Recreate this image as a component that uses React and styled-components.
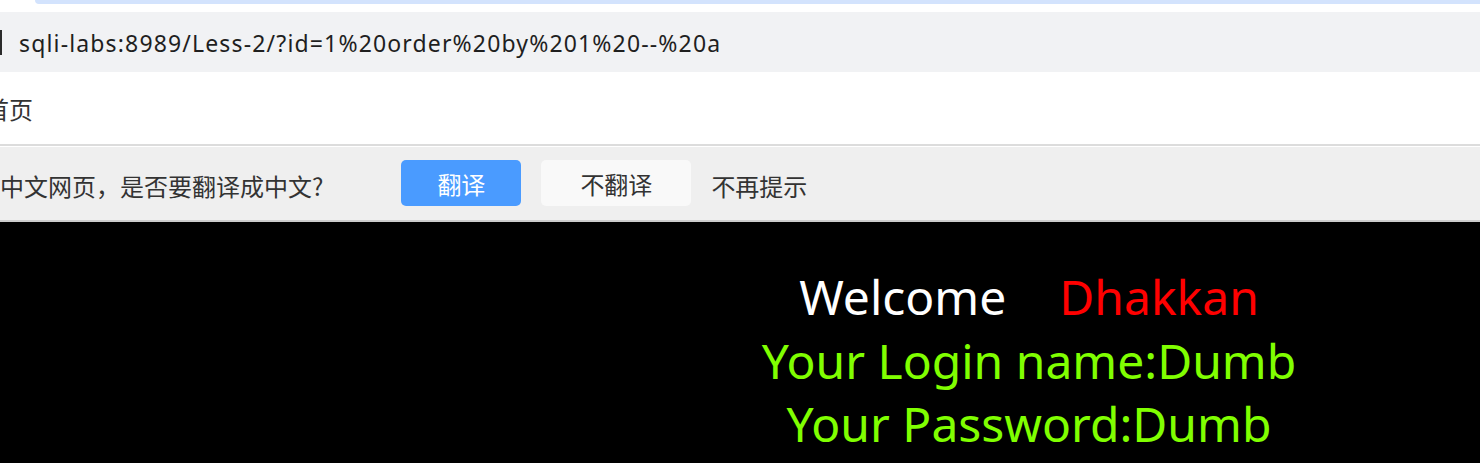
import React from "react";
import styled, { createGlobalStyle } from "styled-components";

const GlobalStyle = createGlobalStyle`
	html,
	body {
		margin: 0;
		padding: 0;
		background: #fff;
		overflow: hidden;
	}
`;

const CJK = `"Noto Sans CJK SC", "Noto Sans", sans-serif`;
const LATIN = `"Noto Sans", "Noto Sans CJK SC", sans-serif`;

const App = () => {
	return (
		<>
			<GlobalStyle />
			<Page>
				<TabStrip>
					<ActiveTabEdge />
				</TabStrip>
				<AddressBar>
					<Caret />
					<Url>sqli-labs:8989/Less-2/?id=1%20order%20by%201%20--%20a</Url>
				</AddressBar>
				<BookmarkBar>
					<Bookmark>首页</Bookmark>
				</BookmarkBar>
				<TranslateBar>
					<Prompt>中文网页，是否要翻译成中文?</Prompt>
					<Actions>
						<Button $primary>翻译</Button>
						<Button $wide>不翻译</Button>
						<TextAction>不再提示</TextAction>
					</Actions>
				</TranslateBar>
				<Content>
					<Line>
						<span>Welcome</span>
						<Name>Dhakkan</Name>
					</Line>
					<Line $green>Your Login name:Dumb</Line>
					<Line $green>Your Password:Dumb</Line>
				</Content>
			</Page>
		</>
	);
};

const Page = styled.div`
	display: flex;
	flex-direction: column;
	width: 1480px;
	height: 463px;
	overflow: hidden;
`;

const TabStrip = styled.div`
	height: 12px;
	background: #fff;
`;

const ActiveTabEdge = styled.div`
	margin-left: 35px;
	height: 4px;
	background: #d3e3fd;
	border-bottom-left-radius: 8px;
`;

const AddressBar = styled.div`
	height: 60px;
	background: #f1f2f4;
	display: flex;
	align-items: center;
	gap: 17px;
`;

const Caret = styled.div`
	width: 2px;
	height: 25px;
	background: #2b2b2b;
`;

const Url = styled.div`
	font-family: ${LATIN};
	font-size: 23px;
	letter-spacing: 1.15px;
	color: #1f1f1f;
	white-space: nowrap;
	margin-top: 2px;
`;

const BookmarkBar = styled.div`
	height: 72px;
	background: #fff;
	display: flex;
	align-items: center;
`;

const Bookmark = styled.div`
	font-family: ${CJK};
	font-size: 24px;
	color: #333;
	margin-left: -15px;
`;

const TranslateBar = styled.div`
	height: 78px;
	box-sizing: border-box;
	border-top: 2px solid #dcdcdc;
	border-bottom: 2px solid #cdcdcd;
	box-shadow: inset 0 1px 0 #fff;
	background: #efefef;
	display: flex;
	align-items: center;
	gap: 78px;
`;

const Prompt = styled.div`
	font-family: ${CJK};
	font-size: 24px;
	color: #333;
	white-space: nowrap;
	margin-top: 4px;
`;

const Actions = styled.div`
	display: flex;
	align-items: center;
	gap: 20px;
`;

const Button = styled.div`
	width: ${(p) => (p.$wide ? "150px" : "120px")};
	height: 46px;
	border-radius: 5px;
	display: flex;
	align-items: center;
	justify-content: center;
	font-family: ${CJK};
	font-size: 24px;
	background: ${(p) => (p.$primary ? "#4a9bff" : "#f9f9f9")};
	color: ${(p) => (p.$primary ? "#fff" : "#333")};
`;

const TextAction = styled.div`
	font-family: ${CJK};
	font-size: 24px;
	color: #333;
	margin-top: 4px;
`;

const Content = styled.div`
	flex: 1;
	background: #000;
	display: flex;
	flex-direction: column;
	align-items: center;
	padding-left: 578px;
	padding-top: 43px;
	font-family: ${LATIN};
	font-size: 48px;
	line-height: 63.5px;
`;

const Line = styled.div`
	color: ${(p) => (p.$green ? "#80ff00" : "#fff")};
	white-space: pre;
	display: flex;
	gap: 53px;
`;

const Name = styled.span`
	color: #ff0000;
`;

export default App;
